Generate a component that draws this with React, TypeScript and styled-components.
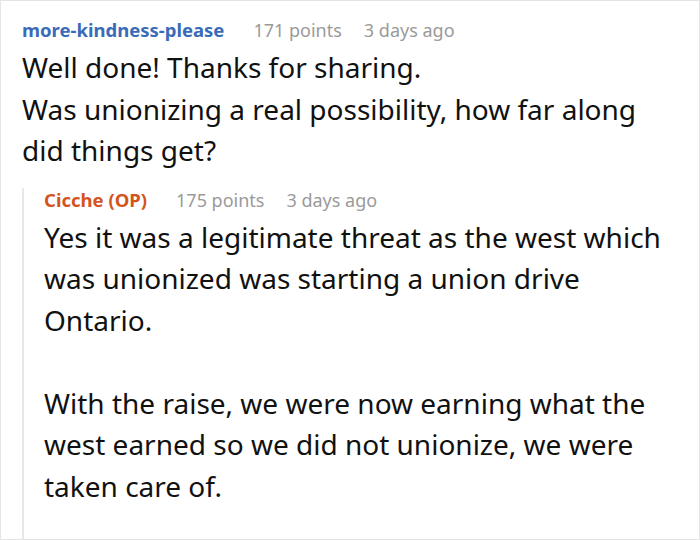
import React, { FC } from "react";
import styled, { createGlobalStyle } from "styled-components";

const GlobalStyle = createGlobalStyle`
  html, body {
    margin: 0;
    padding: 0;
    background: #ffffff;
  }
  body {
    font-family: "Noto Sans", "Open Sans", sans-serif;
  }
`;

interface CommentProps {
  className?: string;
  author: string;
  isOp?: boolean;
  points: number;
  age: string;
  paragraphs: string[][];
  children?: React.ReactNode;
}

const Frame = styled.div`
  box-sizing: border-box;
  width: 700px;
  height: 540px;
  border: 1px solid #e4e4e4;
  padding: 17px 30px 0 21px;
  overflow: hidden;
  background: #fff;
`;

const Header = styled.div`
  display: flex;
  align-items: baseline;
  gap: 29px;
  font-size: 18px;
  line-height: 24px;
`;

const Author = styled.span<{ $op?: boolean }>`
  font-size: 18.5px;
  font-weight: 700;
  color: ${(p) => (p.$op ? "#d4541e" : "#3a6bb8")};
`;

const Meta = styled.span`
  display: flex;
  gap: 22px;
  color: #9a9a9a;
`;

const Body = styled.div`
  margin-top: 5px;
  color: #111;
  font-size: 28px;
  line-height: 41.5px;
`;

const Para = styled.p`
  margin: 0;
  & + & {
    margin-top: 41.5px;
  }
`;

const Replies = styled.div`
  margin-top: 16px;
  border-left: 2px solid #e8e8e8;
  padding-left: 20px;
  min-height: 400px;
`;

const Comment: FC<CommentProps> = ({
  className,
  author,
  isOp,
  points,
  age,
  paragraphs,
  children,
}) => (
  <div className={className}>
    <Header>
      <Author $op={isOp}>{isOp ? `${author} (OP)` : author}</Author>
      <Meta>
        <span>{points} points</span>
        <span>{age}</span>
      </Meta>
    </Header>
    <Body>
      {paragraphs.map((lines, i) => (
        <Para key={i}>
          {lines.map((line, j) => (
            <React.Fragment key={j}>
              {j > 0 && <br />}
              {line}
            </React.Fragment>
          ))}
        </Para>
      ))}
    </Body>
    {children && <Replies>{children}</Replies>}
  </div>
);

const App: FC = () => (
  <>
    <GlobalStyle />
    <Frame>
      <Comment
        author="more-kindness-please"
        points={171}
        age="3 days ago"
        paragraphs={[
          [
            "Well done! Thanks for sharing.",
            "Was unionizing a real possibility, how far along did things get?",
          ],
        ]}
      >
        <Comment
          author="Cicche"
          isOp
          points={175}
          age="3 days ago"
          paragraphs={[
            [
              "Yes it was a legitimate threat as the west which was unionized was starting a union drive Ontario.",
            ],
            [
              "With the raise, we were now earning what the west earned so we did not unionize, we were taken care of.",
            ],
          ]}
        />
      </Comment>
    </Frame>
  </>
);

export default App;
